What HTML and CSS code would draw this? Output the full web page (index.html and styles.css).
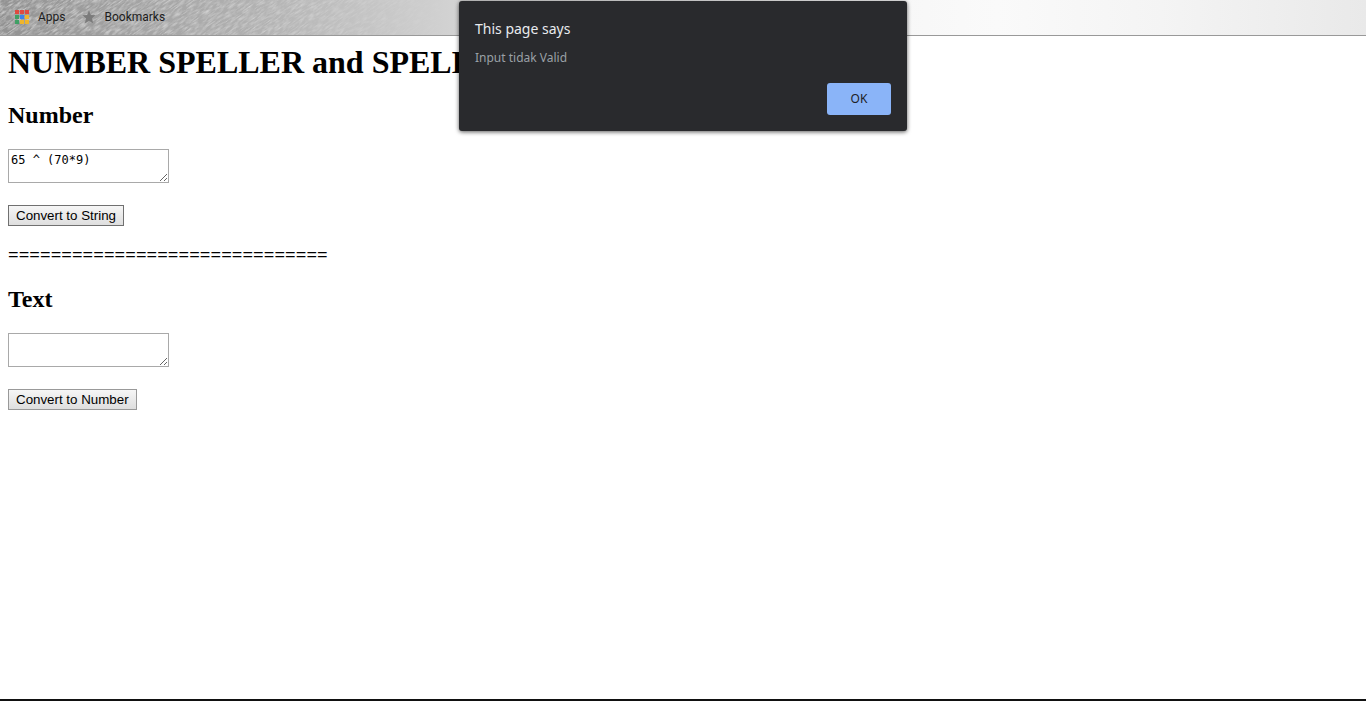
FILE: index.html
```html
<!DOCTYPE html>
<html lang="en">
<head>
<meta charset="utf-8">
<meta name="viewport" content="width=device-width, initial-scale=1">
<title>Number Speller</title>
<link rel="stylesheet" href="styles.css">
</head>
<body>
<nav class="bookmarks" aria-label="Bookmarks bar">
  <svg class="texture" aria-hidden="true">
    <defs>
      <filter id="brushed" x="0" y="0" width="100%" height="100%">
        <feTurbulence type="fractalNoise" baseFrequency="0.12 0.7" numOctaves="3" seed="4"/>
        <feColorMatrix values="0 0 0 0 1  0 0 0 0 1  0 0 0 0 1  1.3 0 0 0 -0.5"/>
      </filter>
      <linearGradient id="fade">
        <stop offset="0" stop-color="#fff"/>
        <stop offset="0.6" stop-color="#999"/>
        <stop offset="1" stop-color="#000"/>
      </linearGradient>
      <mask id="fade-mask"><rect width="460" height="36" fill="url(#fade)"/></mask>
    </defs>
    <g mask="url(#fade-mask)">
      <g transform="rotate(-35)"><rect x="-60" y="-20" width="520" height="340" filter="url(#brushed)"/></g>
    </g>
  </svg>
  <a class="bookmark" href="#apps">
    <svg class="icon" viewBox="0 0 14 14" shape-rendering="crispEdges" aria-hidden="true">
      <path fill="#e04a40" d="M0 0h4v4H0zM5 0h4v4H5zM10 0h4v4h-4z"/>
      <path fill="#3fa065" d="M0 5h4v4H0zM0 10h4v4H0z"/>
      <path fill="#3c82ea" d="M5 5h4v4H5z"/>
      <path fill="#efb52c" d="M10 5h4v4h-4zM5 10h4v4H5zM10 10h4v4h-4z"/>
    </svg>
    Apps
  </a>
  <a class="bookmark" href="#bookmarks">
    <svg class="icon" viewBox="0 0 14 14" aria-hidden="true">
      <path fill="#7b7b7b" d="M7 0.5l1.8 4.4 4.9.4-3.8 3.1 1.3 4.9L7 10.7l-4.2 2.6 1.3-4.9L.3 5.3l4.9-.4z"/>
    </svg>
    Bookmarks
  </a>
</nav>
<main class="page">
  <h1 class="title">NUMBER SPELLER and SPELLER NUMBER</h1>
  <h2 class="heading"><label for="number">Number</label></h2>
  <textarea class="field" id="number" rows="2">65 ^ (70*9)</textarea>
  <button class="convert focused" type="button">Convert to String</button>
  <h3 class="divider">==============================</h3>
  <h2 class="heading"><label for="text">Text</label></h2>
  <textarea class="field" id="text" rows="2"></textarea>
  <button class="convert" type="button">Convert to Number</button>
</main>
<section class="dialog" role="alertdialog" aria-labelledby="dialog-title" aria-describedby="dialog-message">
  <p class="dialog-title" id="dialog-title">This page says</p>
  <p class="dialog-message" id="dialog-message">Input tidak Valid</p>
  <button class="ok" type="button">OK</button>
</section>
</body>
</html>
```
FILE: styles.css
```css
* {
  box-sizing: border-box;
}

body {
  margin: 0;
  min-height: 100vh;
  display: flex;
  flex-direction: column;
  background: #fff;
  color: #000;
  font-family: "Liberation Serif", "Times New Roman", serif;
  border-bottom: 2px solid #111;
}

.bookmarks {
  position: relative;
  display: flex;
  align-items: center;
  gap: 16px;
  height: 36px;
  padding: 0 15px 1px;
  border-bottom: 1px solid #999;
  background: linear-gradient(90deg, #929292 0%, #a0a0a0 8%, #b0b0b0 18%, #d2d2d2 33%, #f5f5f5 60%, #fafafa 73%, #f4f4f4 85%, #e9e9e9 100%);
  font: 12px/16px Roboto, sans-serif;
}

.texture {
  position: absolute;
  inset: 0;
  width: 100%;
  height: 100%;
}

.bookmark {
  position: relative;
  display: flex;
  align-items: center;
  gap: 9px;
  color: #1c1c1c;
  text-decoration: none;
}

.icon {
  width: 14px;
  height: 14px;
}

.page {
  flex: 1;
  display: flex;
  flex-direction: column;
  align-items: flex-start;
  padding: 8px;
}

.title {
  margin: 0 0 21px;
  font-size: 32px;
  line-height: 37px;
  white-space: nowrap;
}

.heading {
  margin: 0 0 20px;
  font-size: 24px;
  line-height: 27px;
}

.field {
  width: 161px;
  height: 34px;
  margin: 0 0 22px;
  padding: 2px;
  border: 1px solid #a9a9a9;
  background: #fff;
  color: #000;
  font: 12px/16px "DejaVu Sans Mono", monospace;
  overflow: hidden;
  resize: both;
}

.convert {
  padding: 2px 7px;
  border: 1px solid #999;
  background: linear-gradient(#f6f6f6, #dedede);
  color: #000;
  font-family: "Liberation Sans", Arial, sans-serif;
  line-height: 15px;
}

.convert.focused {
  border-color: #707070;
}

.divider {
  margin: 18px 0 20px;
  line-height: 22px;
}

.dialog {
  position: absolute;
  top: 1px;
  left: 50%;
  width: 448px;
  transform: translateX(-50%);
  display: flex;
  flex-direction: column;
  padding: 16px;
  border-radius: 3px;
  background: #292a2d;
  box-shadow: 0 1px 4px rgba(0, 0, 0, 0.65);
  font-family: "Noto Sans", sans-serif;
}

.dialog-title {
  margin: 0 0 6px;
  color: #e8eaed;
  font-size: 14px;
  line-height: 24px;
}

.dialog-message {
  margin: 0 0 14px;
  color: #9aa0a6;
  font-size: 12px;
  line-height: 22px;
}

.ok {
  align-self: flex-end;
  width: 64px;
  height: 32px;
  padding: 0;
  border: 0;
  border-radius: 3px;
  background: #8ab4f8;
  color: #202124;
  font: 12px/16px "Noto Sans", sans-serif;
}
```
